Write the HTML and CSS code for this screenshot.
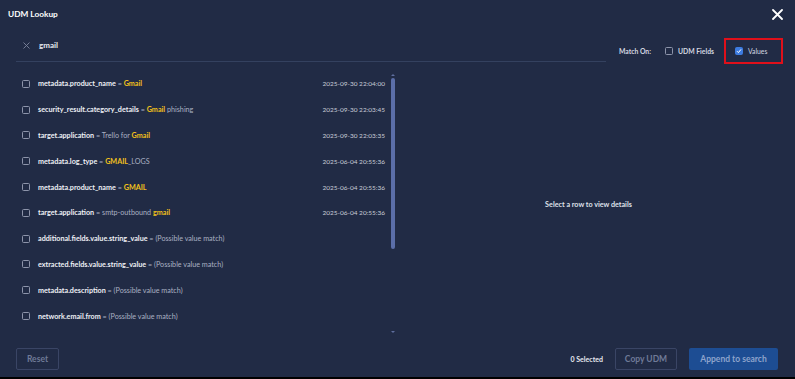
FILE: index.html
```html
<!DOCTYPE html>
<html>
<head>
<meta charset="utf-8">
<link rel="stylesheet" href="styles.css">
</head>
<body>
<div class="dialog">
  <div class="header">
    <div class="title">UDM Lookup</div>
    <svg class="close" width="11" height="11" viewBox="0 0 11 11"><path d="M1 1L10 10M10 1L1 10" stroke="#fff" stroke-width="1.8" stroke-linecap="round"/></svg>
  </div>
  <div class="toolbar">
    <div class="search">
      <svg class="clear" width="7" height="7" viewBox="0 0 7 7"><path d="M0.5 0.5L6.5 6.5M6.5 0.5L0.5 6.5" stroke="#7d859c" stroke-width="0.9"/></svg>
      <span class="query">gmail</span>
    </div>
    <div class="match">
      <span class="match-label">Match On:</span>
      <label class="opt"><span class="cb"></span>UDM Fields</label>
      <label class="opt opt-hl"><span class="cb cb-on"><svg width="6" height="6" viewBox="0 0 6 6"><path d="M1 3.2L2.4 4.6L5 1.4" stroke="#fff" stroke-width="1" fill="none"/></svg></span>Values</label>
    </div>
  </div>
  <div class="content">
    <div class="list-wrap">
      <div class="list">
        <div class="row"><span class="cb"></span><span class="txt"><b>metadata.product_name</b> = <em>Gmail</em></span><span class="date">2025-09-30 22:04:00</span></div>
        <div class="row"><span class="cb"></span><span class="txt"><b>security_result.category_details</b> = <em>Gmail</em> phishing</span><span class="date">2025-09-30 22:03:45</span></div>
        <div class="row"><span class="cb"></span><span class="txt"><b>target.application</b> = Trello for <em>Gmail</em></span><span class="date">2025-09-30 22:03:35</span></div>
        <div class="row"><span class="cb"></span><span class="txt"><b>metadata.log_type</b> = <em>GMAIL</em>_LOGS</span><span class="date">2025-06-04 20:55:36</span></div>
        <div class="row"><span class="cb"></span><span class="txt"><b>metadata.product_name</b> = <em>GMAIL</em></span><span class="date">2025-06-04 20:55:36</span></div>
        <div class="row"><span class="cb"></span><span class="txt"><b>target.application</b> = smtp-outbound <em>gmail</em></span><span class="date">2025-06-04 20:55:36</span></div>
        <div class="row"><span class="cb"></span><span class="txt"><b>additional.fields.value.string_value</b> = (Possible value match)</span></div>
        <div class="row"><span class="cb"></span><span class="txt"><b>extracted.fields.value.string_value</b> = (Possible value match)</span></div>
        <div class="row"><span class="cb"></span><span class="txt"><b>metadata.description</b> = (Possible value match)</span></div>
        <div class="row"><span class="cb"></span><span class="txt"><b>network.email.from</b> = (Possible value match)</span></div>
      </div>
      <div class="scrollbar">
        <span class="arrow up"></span>
        <div class="track"><div class="thumb"></div></div>
        <span class="arrow down"></span>
      </div>
    </div>
    <div class="detail">Select a row to view details</div>
  </div>
  <div class="footer">
    <button class="btn btn-outline">Reset</button>
    <div class="spacer"></div>
    <span class="count">0 Selected</span>
    <button class="btn btn-outline copy">Copy UDM</button>
    <button class="btn btn-primary">Append to search</button>
  </div>
</div>
</body>
</html>
```
FILE: styles.css
```css
* { box-sizing: border-box; }
html, body { margin: 0; padding: 0; }
body {
  background: #000;
  font-family: "Lato", "Noto Sans", sans-serif;
  color: #e6e9f0;
}
.dialog {
  width: 795px;
  height: 377px;
  background: #212b45;
  display: flex;
  flex-direction: column;
}
.header {
  height: 28px;
  display: flex;
  align-items: center;
  justify-content: space-between;
  padding: 0 12px 0 8px;
}
.title {
  font-size: 8.3px;
  font-weight: 700;
  color: #fff;
}
.close { display: block; }
.toolbar {
  height: 34px;
  display: flex;
  align-items: flex-end;
  padding-left: 16px;
  padding-right: 12px;
}
.search {
  flex: 1;
  height: 26px;
  border-bottom: 1px solid #34415f;
  display: flex;
  align-items: center;
  padding-left: 6px;
  padding-bottom: 7px;
}
.clear { margin-right: 9px; margin-left: 1px; }
.query { font-size: 8px; font-weight: 700; color: #e6e9f0; }
.match {
  display: flex;
  align-items: center;
  margin-left: 13px;
  height: 26px;
  margin-bottom: -2px;
  font-size: 6.8px;
  color: #d4d8e2;
  font-weight: 700;
}
.match-label { margin-right: 14px; }
.opt {
  display: flex;
  align-items: center;
  gap: 5px;
}
.opt-hl {
  margin-left: 10px;
  border: 2px solid #e0101a;
  height: 26px;
  width: 59px;
  padding-left: 9px;
  font-weight: 400;
}
.cb {
  width: 8px;
  height: 8px;
  border: 1px solid #8d94aa;
  border-radius: 1.5px;
  flex: none;
  display: inline-flex;
  align-items: center;
  justify-content: center;
}
.cb-on { background: #3d7be0; border-color: #3d7be0; }
.cb-on svg { display: block; }
.content {
  flex: 1;
  display: flex;
  padding-top: 8px;
}
.list-wrap {
  width: 381px;
  margin-left: 16px;
  display: flex;
  height: 267px;
}
.list { flex: 1; padding-top: 1px; }
.row {
  height: 25.8px;
  display: flex;
  align-items: center;
  padding-left: 6px;
  padding-right: 4px;
  font-size: 7.2px;
}
.row .cb { margin-right: 8px; }
.txt { flex: 1; color: #aab1c3; white-space: nowrap; }
.txt b { color: #eef0f5; font-weight: 700; }
.txt em { font-style: normal; font-weight: 700; color: #f2c11b; }
.date { color: #c9cdd8; font-size: 6.5px; }
.scrollbar {
  width: 8px;
  display: flex;
  flex-direction: column;
  align-items: center;
  padding-top: 2px;
  padding-bottom: 2px;
}
.arrow { width: 0; height: 0; border-left: 2px solid transparent; border-right: 2px solid transparent; margin: 2px 0; }
.arrow.up { border-bottom: 2px solid #5f6e9e; }
.arrow.down { border-top: 2px solid #5f6e9e; }
.track { flex: 1; width: 4px; }
.thumb { width: 4px; height: 171px; background: #5b6ea8; border-radius: 2px; }
.detail {
  flex: 1;
  display: flex;
  align-items: center;
  justify-content: center;
  font-size: 7.2px;
  font-weight: 700;
  color: #dfe2ea;
  padding-top: 2px;
  margin-right: 15px;
}
.footer {
  height: 40px;
  display: flex;
  align-items: center;
  padding: 4px 17px 0 16px;
}
.spacer { flex: 1; }
.btn {
  height: 22px;
  font-family: inherit;
  font-size: 8.5px;
  font-weight: 700;
  border-radius: 2px;
  padding: 0;
}
.btn-outline {
  background: transparent;
  border: 1px solid #3a4565;
  color: #6f7a97;
  width: 43px;
}
.copy { width: 62px; margin-left: 12px; margin-right: 12px; }
.count { font-size: 7px; font-weight: 700; color: #e6e9f0; }
.btn-primary {
  background: #1d4d93;
  border: none;
  color: #8ea4cc;
  width: 89px;
}
```
